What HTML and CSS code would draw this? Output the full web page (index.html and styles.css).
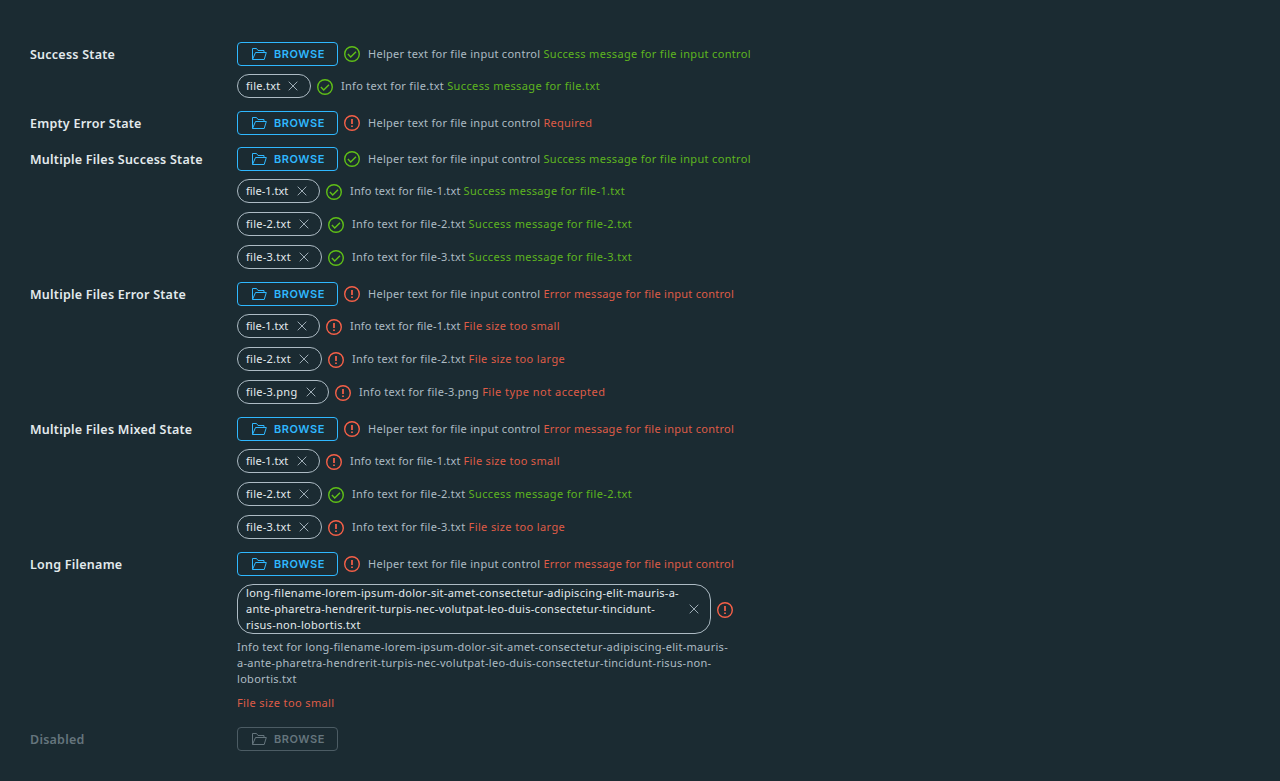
FILE: index.html
```html
<!DOCTYPE html>
<html lang="en">
<head>
<meta charset="utf-8">
<title>File input states</title>
<link rel="stylesheet" href="styles.css">
</head>
<body>
<svg class="defs" aria-hidden="true">
<symbol id="folder" viewBox="0 0 16 16"><path d="M1.5 13.5V2.5h4l1.5 2h6v2M1.5 13.5 4.5 6.5h10.8l-2.1 7z"/></symbol>
<symbol id="close" viewBox="0 0 16 16"><path d="M3.7 3.7l8.6 8.6M12.3 3.7l-8.6 8.6"/></symbol>
<symbol id="ok" viewBox="0 0 16 16"><circle cx="8" cy="8" r="7.3"/><path d="M3.9 8.1l2.8 2.8 5.3-5.2"/></symbol>
<symbol id="bad" viewBox="0 0 16 16"><circle cx="8" cy="8" r="7.3"/><path class="mark" d="M8 3.9v5M8 10.4v1.7"/></symbol>
</svg>
<main class="form" id="form"></main>
<script src="app.js"></script>
</body>
</html>
```
FILE: app.js
```js
const icon = (name, cls) => `<svg class="icon ${cls}"><use href="#${name}"/></svg>`;
const status = s => icon(s, s === 'ok' ? 'success' : 'error');
const message = (s, t) => `<span class="${s === 'ok' ? 'success-text' : 'error-text'}${t.startsWith('File type') ? ' wide' : ''}">${t}</span>`;
const success = n => [n, 'ok', `Success message for ${n}`];
const small = 'File size too small', large = 'File size too large';
const okText = 'Success message for file input control';
const badText = 'Error message for file input control';
const longName = 'long-filename-lorem-ipsum-dolor-sit-amet-consectetur-adipiscing-elit-mauris-a-ante-pharetra-hendrerit-turpis-nec-volutpat-leo-duis-consectetur-tincidunt-risus-non-lobortis.txt';

const groups = [
  ['Success State', 'ok', okText, [success('file.txt')]],
  ['Empty Error State', 'bad', 'Required', []],
  ['Multiple Files Success State', 'ok', okText, ['file-1.txt', 'file-2.txt', 'file-3.txt'].map(success)],
  ['Multiple Files Error State', 'bad', badText, [['file-1.txt', 'bad', small], ['file-2.txt', 'bad', large], ['file-3.png', 'bad', 'File type not accepted']]],
  ['Multiple Files Mixed State', 'bad', badText, [['file-1.txt', 'bad', small], success('file-2.txt'), ['file-3.txt', 'bad', large]]],
  ['Long Filename', 'bad', badText, [[longName, 'bad', small]]],
  ['Disabled', null, '', []]
];

const chipClass = { 'file.txt': 'chip-xs', 'file-1.txt': 'chip-sm', 'file-3.png': 'chip-lg' };

// Breaks the long name over explicit lines at the given words.
const breakAfter = (name, words) => words.reduce((t, w) => t.replace(w, w + '<br>'), name);

function fileRow([name, state, text]) {
  if (name === longName) {
    return `<div class="file long"><div class="file-head"><div class="chip chip-long"><span>${breakAfter(name, ['mauris-a-', 'tincidunt-'])}</span>${icon('close', 'close')}</div>${status(state)}</div>
      <p class="info">Info text for ${breakAfter(name, ['elit-mauris-', 'risus-non-'])}</p><p class="long-message">${message(state, text)}</p></div>`;
  }
  return `<div class="file"><div class="chip ${chipClass[name] || ''}"><span>${name}</span>${icon('close', 'close')}</div>${status(state)}<p class="info${name === 'file-1.txt' ? ' tight' : ''}">Info text for ${name} ${message(state, text)}</p></div>`;
}

document.getElementById('form').innerHTML = groups.map(([label, state, text, files]) => `
  <section class="group${state ? '' : ' disabled'}"><h2 class="label"><span>${label}</span></h2><div class="control">
    <div class="head"><button class="browse"${state ? '' : ' disabled'}>${icon('folder', 'folder')}<span>BROWSE</span></button>${state ? status(state) + `<p class="info">Helper text for file input control ${message(state, text)}</p>` : ''}</div>
    ${files.length ? `<div class="files">${files.map(fileRow).join('')}</div>` : ''}</div></section>`).join('');
```
FILE: styles.css
```css
* { box-sizing: border-box; }
body {
  margin: 0;
  height: 781px;
  overflow: hidden;
  background: #1b2b32;
  color: #adbbc4;
  font: 11px/16px "Noto Sans", sans-serif;
  letter-spacing: 0.27px;
}
p { margin: 0; white-space: nowrap; }
.defs { position: absolute; width: 0; height: 0; }
.form { display: flex; flex-direction: column; gap: 12px; padding: 42px 30px 0; }
.group { display: grid; grid-template-columns: 207px 1fr; }
.label { height: 24px; margin: 0; color: #e3eaed; font: 600 12.5px/25px "Noto Sans", sans-serif; letter-spacing: 0.24px; }
.head, .file, .file-head { display: flex; align-items: center; gap: 8px; }
.head { height: 24px; }
.browse {
  display: flex; align-items: center; gap: 7px;
  width: 101px; height: 24px; margin-right: -2px; padding: 0 0 0 13px;
  border: 1px solid #2fb8ff; border-radius: 4px;
  background: none; color: #2fb8ff;
  font: 600 11px/22px Inter, sans-serif; letter-spacing: 0.55px;
}
.icon { flex: none; width: 16px; height: 16px; fill: none; stroke: currentColor; stroke-width: 1.4; }
.folder { stroke-width: 1; }
.success { color: #60c017; }
.error { color: #f76048; }
.success-text { color: #5eb520; letter-spacing: 0.33px; }
.error-text { color: #df5c47; }
.files .info { letter-spacing: 0.29px; }
.files .success-text { letter-spacing: 0.38px; }
.files .error-text { letter-spacing: 0.38px; }
.files .wide { letter-spacing: 0.48px; }
.files .tight { letter-spacing: 0.17px; }
.files .tight span { letter-spacing: 0.31px; }
.mark { stroke-width: 1.7; }
.files { display: flex; flex-direction: column; gap: 9px; margin-top: 8px; padding-bottom: 1px; }
.chip {
  display: flex; align-items: center; justify-content: space-between;
  width: 85px; height: 24px; margin-right: -2px; padding: 0 9px 0 8px;
  border: 1px solid #adbbc4; border-radius: 12px;
  color: #e3eaed; white-space: nowrap;
}
.chip-xs { width: 74px; }
.chip-sm { width: 83px; letter-spacing: 0; }
.chip-lg { width: 92px; }
.chip-long { width: 474px; height: 50px; border-radius: 16px; padding-right: 8px; letter-spacing: 0.29px; }
.close { color: #adbbc4; stroke-width: 0.9; }
.file .success, .file .error { position: relative; top: 1px; }
.long { display: block; padding-bottom: 3px; }
.long .info { margin-top: 5px; letter-spacing: 0.29px; }
.long-message { margin-top: 8px; }
.disabled .label, .disabled .browse { color: #65757d; border-color: #4c5c64; }
```
